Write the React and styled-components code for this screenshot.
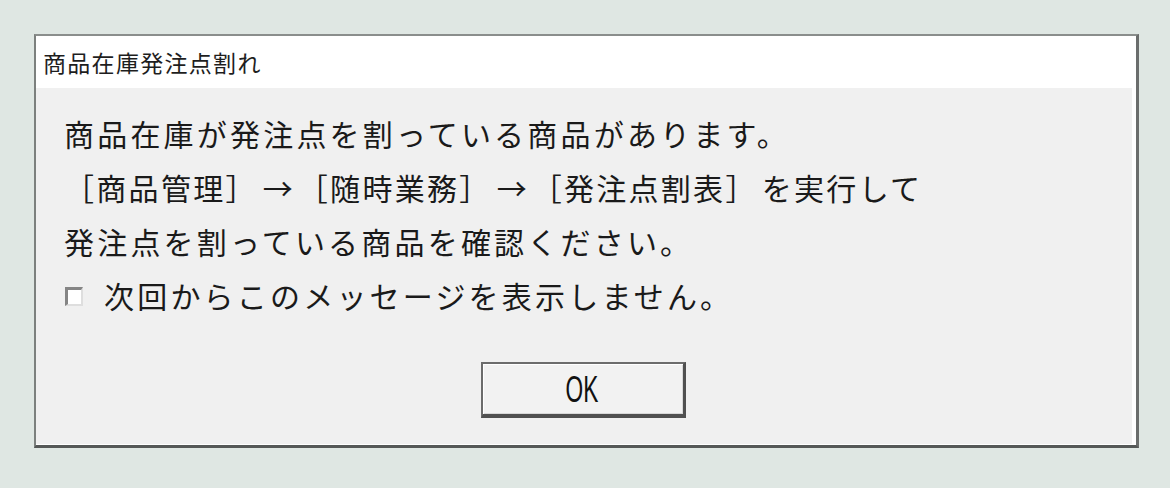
import React from 'react';
import styled, { createGlobalStyle } from 'styled-components';

const Global = createGlobalStyle`
  html, body {
    margin: 0;
    padding: 0;
  }
  body {
    font-family: "Noto Sans CJK JP", "Noto Sans", sans-serif;
  }
`;

const Screen = styled.div`
  width: 1170px;
  height: 488px;
  background: #dfe7e3;
  padding: 34px 0 0 34px;
  box-sizing: border-box;
  overflow: hidden;
`;

const Dialog = styled.div`
  width: 1105px;
  box-sizing: border-box;
  background: #ffffff;
  border-top: 2px solid #8a8e8c;
  border-left: 2px solid #7c807e;
  border-right: 3px solid #6a6d6c;
  border-bottom: 3px solid #555857;
  display: flex;
  flex-direction: column;
`;

const TitleBar = styled.div`
  height: 52px;
  display: flex;
  align-items: center;
  padding-left: 7px;
  font-size: 23px;
  letter-spacing: 1.3px;
  color: #1e1e1e;
`;

const Body = styled.div`
  margin: 0 4px 1px 0;
  background: #f0f0f0;
  padding: 18px 0 26px 28px;
  display: flex;
  flex-direction: column;
`;

const Line = styled.div`
  height: 54px;
  display: flex;
  align-items: center;
  font-size: 30px;
  letter-spacing: ${p => p.$ls ?? 3.2}px;
  color: #1a1a1a;
  white-space: pre;
`;

const Arrow = styled.span`
  display: inline-block;
  width: 40px;
  text-align: center;
  letter-spacing: 0;
`;

const Gap = styled.span`
  display: inline-block;
  width: ${p => p.$w}px;
`;

const CheckBox = styled.span`
  display: block;
  flex: 0 0 18px;
  width: 18px;
  height: 19px;
  box-sizing: border-box;
  margin: 2px 21px 0 1px;
  background: #fff;
  border-top: 3px solid #858585;
  border-left: 3px solid #858585;
  border-right: 2px solid #dedede;
  border-bottom: 2px solid #dedede;
`;

const ButtonRow = styled.div`
  display: flex;
  justify-content: center;
  margin-top: 40px;
  padding-right: 30px;
`;

const Button = styled.button`
  width: 205px;
  height: 56px;
  box-sizing: border-box;
  background: #f2f2f2;
  border-top: 2px solid #6c6c6c;
  border-left: 2px solid #6c6c6c;
  border-right: 3px solid #505050;
  border-bottom: 4px solid #505050;
  box-shadow: inset 1px 1px 0 #ffffff, inset -1px -1px 0 #d8d8d8;
  padding: 0;
  display: flex;
  align-items: center;
  justify-content: center;
  font-family: "Liberation Sans", sans-serif;
  color: #111;
`;

const ButtonLabel = styled.span`
  display: inline-block;
  font-size: 36px;
  line-height: 1;
  transform: scaleX(0.63);
  margin-top: 2px;
`;

export default function App() {
  return (
    <>
      <Global />
      <Screen>
        <Dialog>
          <TitleBar>商品在庫発注点割れ</TitleBar>
          <Body>
            <Line>商品在庫が発注点を割っている商品があります。</Line>
            <Line $ls={2.3}>
              ［商品管理］<Arrow>→</Arrow>［随時業務］<Arrow>→</Arrow>［発注点割表］<Gap $w={4} />を実行して
            </Line>
            <Line>発注点を割っている商品を確認ください。</Line>
            <Line>
              <CheckBox />
              次回からこのメッセージを表示しません。
            </Line>
            <ButtonRow>
              <Button>
                <ButtonLabel>OK</ButtonLabel>
              </Button>
            </ButtonRow>
          </Body>
        </Dialog>
      </Screen>
    </>
  );
}
